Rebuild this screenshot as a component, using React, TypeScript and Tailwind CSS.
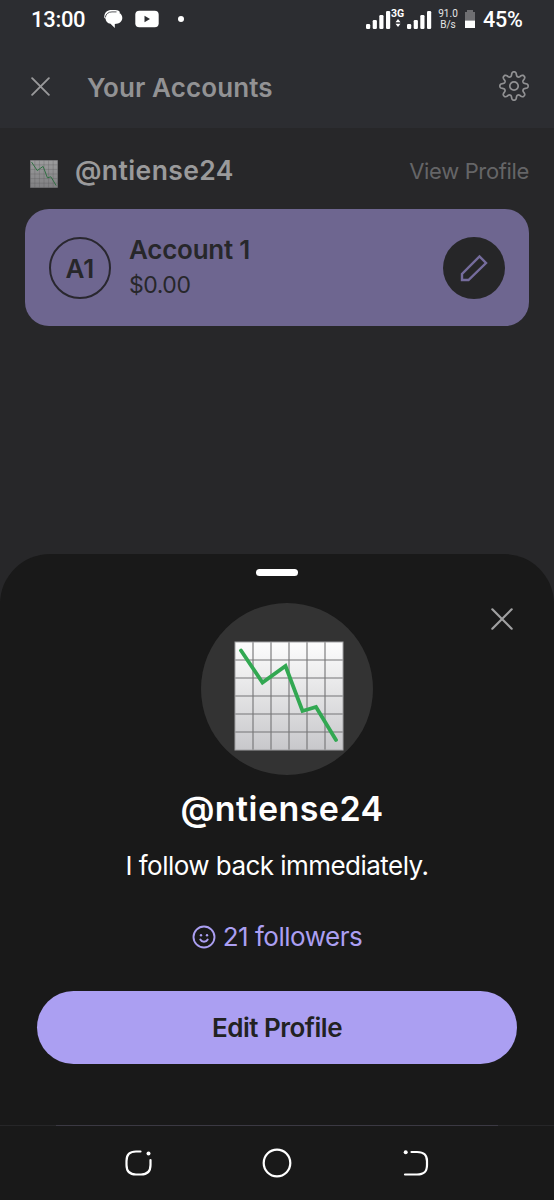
import { ReactNode } from "react";

// Outline of an eight-toothed cog, centred on 0,0
const gearPath = () => {
  const points: string[] = [];
  for (let i = 0; i < 240; i++) {
    const angle = (i / 240) * Math.PI * 2;
    const r = 12 + 2.3 * Math.tanh(1.6 * Math.cos(angle * 8));
    points.push(`${(r * Math.cos(angle)).toFixed(2)} ${(r * Math.sin(angle)).toFixed(2)}`);
  }
  return `M${points.join("L")}Z`;
};

const GearIcon = () => (
  <svg width="32" height="32" viewBox="-16 -16 32 32" fill="none" stroke="#919193" strokeWidth="1.7">
    <path d={gearPath()} strokeLinejoin="round" />
    <circle r="4.2" />
  </svg>
);

const CloseIcon = ({ size, color }: { size: number; color: string }) => (
  <svg width={size} height={size} viewBox="0 0 20 20" fill="none" stroke={color} strokeWidth="2" strokeLinecap="round">
    <path d="M1.200 1.200L18.800 18.800M18.800 1.200L1.200 18.800" />
  </svg>
);

const ChartDown = ({ size, className }: { size: number; className?: string }) => (
  <svg width={size} height={size} viewBox="0 0 110 110" fill="none" className={className}>
    <defs>
      <linearGradient id="sheen" x1="0" y1="0" x2="0" y2="1">
        <stop offset="0" stopColor="#fdfdfd" />
        <stop offset="1" stopColor="#c8c8cb" />
      </linearGradient>
    </defs>
    <rect x="1" y="1" width="108" height="108" fill="url(#sheen)" />
    <path d="M19 1V109M37 1V109M55 1V109M73 1V109M91 1V109M1 19H109M1 37H109M1 55H109M1 73H109M1 91H109" stroke="#747476" strokeWidth="1.1" />
    <rect x="1" y="1" width="108" height="108" stroke="#a2a2a4" strokeWidth="1" />
    <path d="M7 9.5L28.5 41.5L51.5 25L68.5 70L82 66L102 99" stroke="#32a852" strokeWidth="3.8" strokeLinecap="round" />
  </svg>
);

const SignalBars = () => (
  <svg width="25" height="20" viewBox="0 0 25 20" fill="#fff">
    <rect x="0" y="14" width="4.2" height="5" rx="1.2" />
    <rect x="6.7" y="10" width="4.2" height="9" rx="1.2" />
    <rect x="13.3" y="5" width="4.2" height="14" rx="1.2" />
    <rect x="20" y="1" width="4.2" height="18" rx="1.2" />
  </svg>
);

const StatusBar = () => (
  <div className="flex h-10 items-center pl-[31px] pr-[31px] font-[Roboto,sans-serif] text-white">
    <span className="w-[73px] text-[22px] font-medium leading-none tracking-[-0.3px]">13:00</span>
    <svg width="20" height="20" viewBox="0 0 20 20" className="-mt-0.5">
      <path d="M0.300 9C-0.200 4 3 1 7.500 1H11.500C13.500 1 15 1.800 16 3.200L8 12Z" fill="#fff" />
      <path d="M8.500 3.200H12C16 3.200 18.300 5.500 18.300 8.900C18.300 12.300 15.500 14.800 10.800 14.900V19L6.500 14.800C3.500 14.300 1.500 12.300 1.500 9.200C1.500 5.600 4.500 3.200 8.500 3.200Z" fill="#fff" />
      <path d="M1.300 8.500C1.800 4.800 4.500 2.900 8 2.900H12.500" fill="none" stroke="#2c2d31" strokeWidth="0.8" />
    </svg>
    <svg width="24" height="18" viewBox="0 0 24 18" className="ml-[11px] -mt-0.5">
      <rect x="0.300" y="0.700" width="23.400" height="16.600" rx="4" fill="#fff" />
      <path d="M9.500 5.700V12.300L15 9Z" fill="#2c2d31" />
    </svg>
    <span className="-mt-0.5 ml-[18.500px] size-1.5 rounded-full bg-white" />
    <div className="ml-auto flex items-center">
      <SignalBars />
      <div className="-mt-0.5 flex w-[16px] flex-col items-center pb-1">
        <span className="-ml-[3px] text-[10.500px] font-bold leading-[11px]">3G</span>
        <svg width="6" height="8" viewBox="0 0 6 8" fill="#fff" className="-ml-[3px]">
          <path d="M3 0L5.500 3.300H0.500ZM3 8L0.500 4.700H5.500Z" />
        </svg>
      </div>
      <SignalBars />
      <div className="ml-[6px] flex w-[20px] flex-col items-center text-[10px] leading-[11px] -mt-0.5 text-[#e6e6e6]">
        <span>91.0</span>
        <span>B/s</span>
      </div>
      <svg width="12" height="20" viewBox="0 0 12 20" className="ml-[6px] -mt-0.5">
        <path d="M3 1H9V3H11V11.500H1V3H3Z" fill="#6f6f72" />
        <path d="M1 11.500H11V19H1Z" fill="#fff" />
      </svg>
      <span className="ml-[7px] w-[40px] text-[21.500px] font-medium leading-none tracking-[-0.200px]">45%</span>
    </div>
  </div>
);

const Header = () => (
  <header className="flex h-[88px] items-center pl-[31px] pr-6 pt-[5px]">
    <CloseIcon size={19} color="#99999b" />
    <h1 className="ml-[37px] pt-0.5 text-[26px] font-semibold leading-none tracking-[0.100px] text-[#929294]">Your Accounts</h1>
    <div className="-mt-px ml-auto">
      <GearIcon />
    </div>
  </header>
);

const AccountCard = () => (
  <div className="mx-[25px] flex h-[117px] items-center rounded-[24px] bg-[#6e6690] px-6 text-[#27272a]">
    <div className="flex size-[62px] items-center justify-center rounded-full border-2 border-[#29272f] pt-0.5 text-[26px] font-semibold">A1</div>
    <div className="ml-[18px] flex flex-col">
      <span className="text-[26px] font-semibold leading-[34px] tracking-[-0.250px]">Account 1</span>
      <span className="pt-px text-[23px] leading-[35px] tracking-[-0.450px]">$0.00</span>
    </div>
    <div className="ml-auto flex size-[62px] items-center justify-center rounded-full bg-[#262628]">
      <svg width="28" height="28" viewBox="0 0 28 28" fill="none" stroke="#756c9d" strokeWidth="2.400">
        <path d="M2 26V20L19.500 2.500L26 9L8.500 26Z" />
      </svg>
    </div>
  </div>
);

const NavButton = ({ children }: { children: ReactNode }) => (
  <svg width="30" height="30" viewBox="0 0 30 30" fill="none" stroke="#fff" strokeWidth="2.2" strokeLinecap="round">
    {children}
  </svg>
);

const NavBar = () => (
  <nav className="mt-auto h-[75px]">
    <div className="flex h-px bg-[#262628]">
      <div className="mx-[56px] flex-1 bg-[#3b3943]" />
    </div>
    <div className="flex h-[74px] items-center justify-between px-[123px]">
      <NavButton>
        <path d="M17.500 3.500H13C6.500 3.500 3.500 6.500 3.500 13V17C3.500 23.500 6.500 26.500 13 26.500H18C24.500 26.500 27.500 23.500 27.500 17V12" />
        <circle cx="25.500" cy="5.500" r="2" fill="#fff" stroke="none" />
      </NavButton>
      <NavButton>
        <circle cx="15" cy="15" r="13.300" />
      </NavButton>
      <NavButton>
        <path d="M10.500 4H16C23 4 26 7 26 13V17C26 24 23 26.500 16 26.500H4" />
        <circle cx="4.700" cy="4.200" r="2" fill="#fff" stroke="none" />
      </NavButton>
    </div>
  </nav>
);

const ProfileSheet = () => (
  <section className="flex h-[646px] flex-col rounded-t-[50px] bg-[#191919]">
    <div className="mt-[15px] h-[7px] w-[42px] self-center rounded-full bg-white" />
    <div className="mt-[27px] flex items-start">
      <div className="ml-[201px] flex size-[172px] items-center justify-center rounded-full bg-[#333]">
        <ChartDown size={110} className="ml-[3px] mt-[13px]" />
      </div>
      <button className="ml-auto mr-[41px] mt-[5px]">
        <CloseIcon size={22} color="#a0a0a1" />
      </button>
    </div>
    <h2 className="mt-[14px] pl-[10px] text-center text-[34px] font-semibold leading-[40px] tracking-[0.450px] text-white">@ntiense24</h2>
    <p className="mt-[17px] text-center text-[26px] leading-[40px] tracking-[-0.540px] text-white">I follow back immediately.</p>
    <div className="mt-[31px] flex h-10 items-center justify-center text-[#ab9ff2]">
      <svg width="24" height="24" viewBox="0 0 24 24" fill="none" stroke="currentColor" strokeWidth="1.9">
        <circle cx="12" cy="12" r="10.500" />
        <path d="M8.300 14.500C9.800 17.500 14.200 17.500 15.700 14.500" strokeLinecap="round" />
        <circle cx="9" cy="10.200" r="1.200" fill="currentColor" stroke="none" />
        <circle cx="15" cy="10.200" r="1.200" fill="currentColor" stroke="none" />
      </svg>
      <span className="ml-[7px] text-[26px] leading-none tracking-[-0.480px]">21 followers</span>
    </div>
    <button className="mx-[37px] mt-[34px] h-[73px] rounded-full bg-[#ab9ff2] pb-px text-[26px] font-semibold tracking-[-0.500px] text-[#222]">Edit Profile</button>
    <NavBar />
  </section>
);

const App = () => {
  return (
    <div className="flex h-[1200px] w-[554px] flex-col overflow-hidden bg-[#272729] font-[Inter,sans-serif]">
      <div className="bg-[#2c2d31]">
        <StatusBar />
        <Header />
      </div>
      <div className="flex h-[81px] items-center pl-[30px] pr-[25px]">
        <ChartDown size={28} className="mt-[11px] opacity-55" />
        <span className="ml-[17px] pt-[4px] text-[26.500px] font-semibold tracking-[0.400px] text-[#9a9a9b]">@ntiense24</span>
        <span className="ml-auto pt-1.5 text-[22px] tracking-[-0.350px] text-[#656567]">View Profile</span>
      </div>
      <AccountCard />
      <div className="flex-1" />
      <ProfileSheet />
    </div>
  );
};

export default App;
